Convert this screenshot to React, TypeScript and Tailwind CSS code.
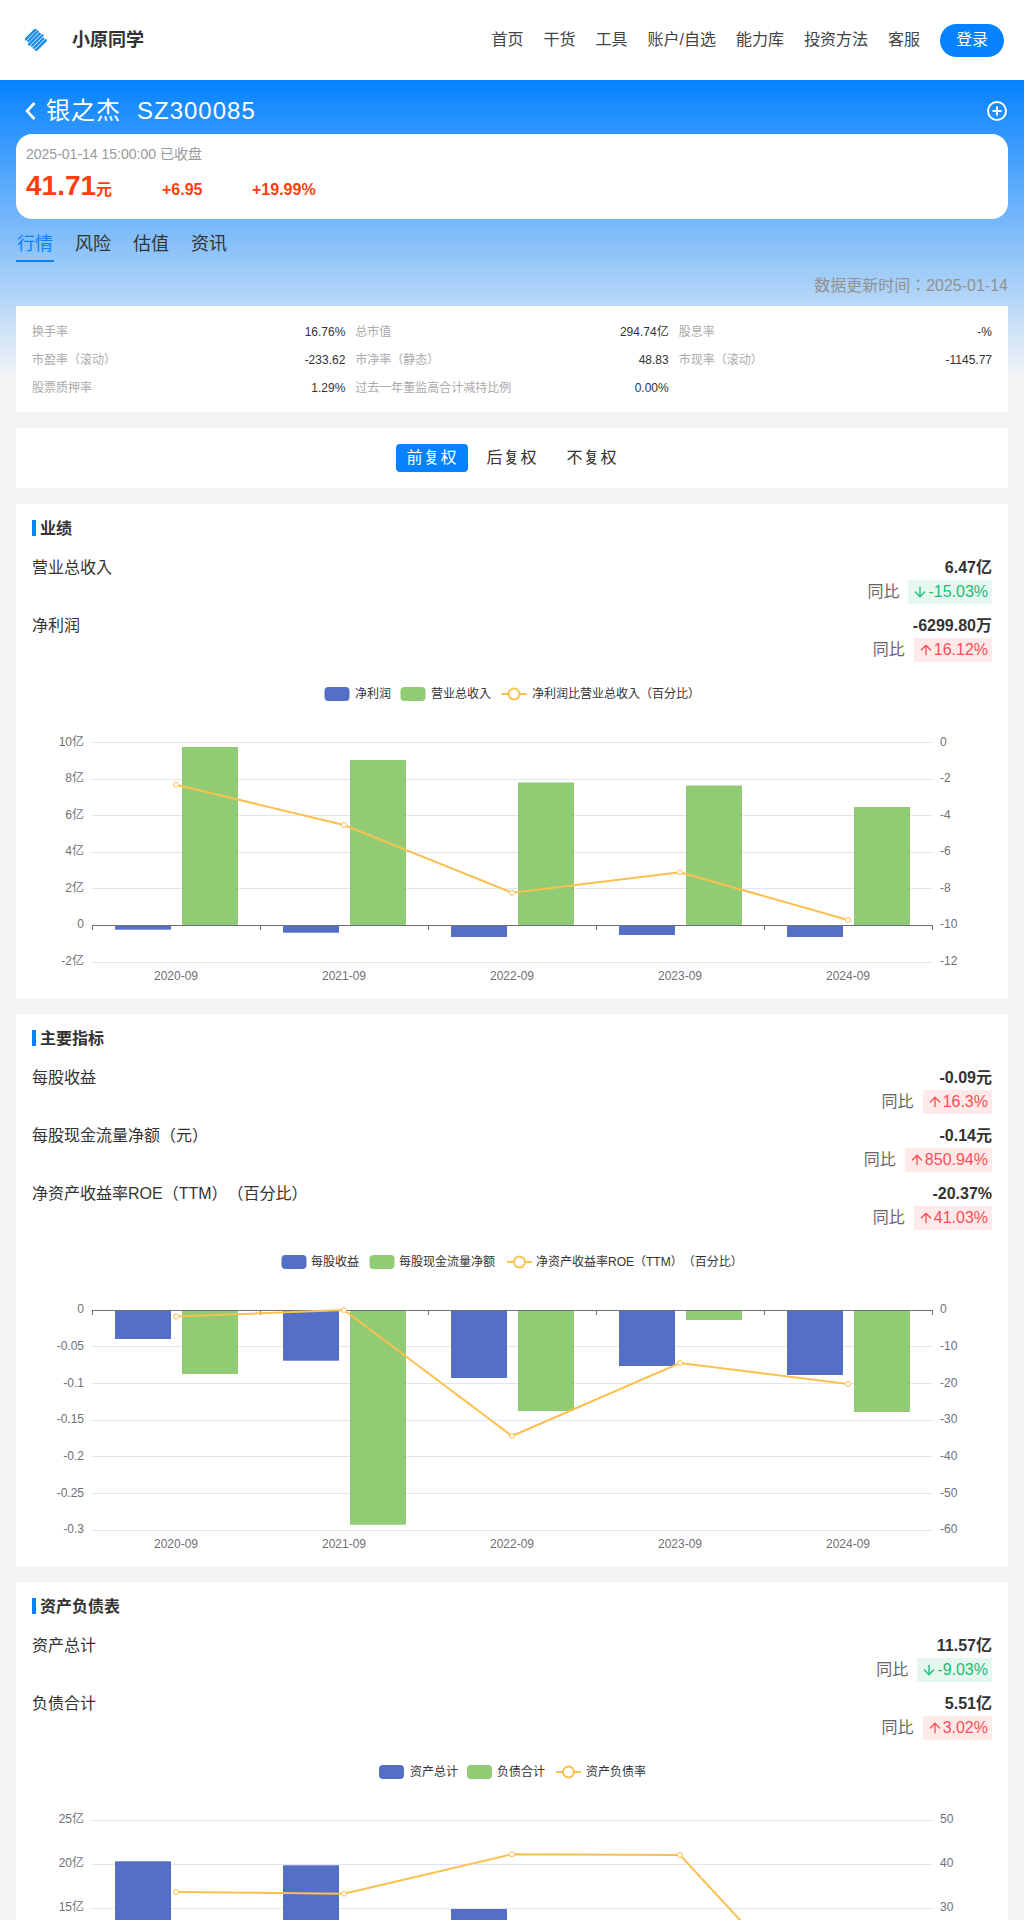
import { ArrowDown, ArrowUp } from "lucide-react";

const nav = ["首页", "干货", "工具", "账户/自选", "能力库", "投资方法", "客服"];
const tabs = ["行情", "风险", "估值", "资讯"];
const years = ["2020-09", "2021-09", "2022-09", "2023-09", "2024-09"];

const stats = [
  ["换手率", "16.76%"],
  ["总市值", "294.74亿"],
  ["股息率", "-%"],
  ["市盈率（滚动）", "-233.62"],
  ["市净率（静态）", "48.83"],
  ["市现率（滚动）", "-1145.77"],
  ["股票质押率", "1.29%"],
  ["过去一年董监高合计减持比例", "0.00%"],
];

const BLUE = "#546fc6";
const GREEN = "#91cc75";
const YELLOW = "#fbc04f";

type ChartProps = {
  top: number;
  zero: number;
  ticks: { y: number; left: string; right: string }[];
  blue: number[];
  green: number[];
  line: number[];
  legend: { x: number; textX: number; label: string; kind: "blue" | "green" | "line" }[];
  labels?: boolean;
};

// crisp 1px rule on the pixel row that holds y
const crisp = (y: number) => Math.floor(y) + 0.5;

const Chart = ({ top, zero, ticks, blue, green, line, legend, labels = true }: ChartProps) => {
  const legendY = top + 24;
  const labelY = ticks[ticks.length - 1].y + 15;
  const cx = (i: number) => 176 + 168 * i;
  const points = line.map((y, i) => `${cx(i)},${y}`).join(" ");

  return (
    <svg viewBox={`16 ${top} 992 328`} className="block w-[992px] h-[328px]">
      {legend.map((item) =>
        item.kind === "line" ? (
          <g key={item.label}>
            <line x1={item.x} x2={item.x + 25} y1={legendY} y2={legendY} stroke={YELLOW} strokeWidth={2} />
            <circle cx={item.x + 12.5} cy={legendY} r={5.5} fill="#fff" stroke={YELLOW} strokeWidth={2} />
            <text x={item.textX} y={legendY + 1} fontSize={12} fill="#333" dominantBaseline="middle">
              {item.label}
            </text>
          </g>
        ) : (
          <g key={item.label}>
            <rect
              x={item.x}
              y={legendY - 7}
              width={25}
              height={14}
              rx={4}
              fill={item.kind === "blue" ? BLUE : GREEN}
            />
            <text x={item.textX} y={legendY + 1} fontSize={12} fill="#333" dominantBaseline="middle">
              {item.label}
            </text>
          </g>
        ),
      )}

      {ticks.map((t) => (
        <g key={t.left}>
          {t.y !== zero && <line x1={92} x2={932} y1={crisp(t.y)} y2={crisp(t.y)} stroke="#e0e6f1" />}
          <text x={84} y={t.y} fontSize={12} fill="#6e7079" textAnchor="end" dominantBaseline="middle">
            {t.left}
          </text>
          <text x={940} y={t.y} fontSize={12} fill="#6e7079" dominantBaseline="middle">
            {t.right}
          </text>
        </g>
      ))}

      {blue.map((y, i) => (
        <rect key={i} x={cx(i) - 61} width={56} y={Math.min(y, zero)} height={Math.abs(y - zero)} fill={BLUE} />
      ))}
      {green.map((y, i) => (
        <rect key={i} x={cx(i) + 6} width={56} y={Math.min(y, zero)} height={Math.abs(y - zero)} fill={GREEN} />
      ))}

      <line x1={92} x2={932} y1={crisp(zero)} y2={crisp(zero)} stroke="#6e7079" />
      {[0, 1, 2, 3, 4, 5].map((i) => (
        <line key={i} x1={92.5 + 168 * i} x2={92.5 + 168 * i} y1={zero} y2={zero + 5} stroke="#6e7079" />
      ))}

      <polyline points={points} fill="none" stroke={YELLOW} strokeWidth={2} />
      {line.map((y, i) => (
        <circle key={i} cx={cx(i)} cy={y} r={2.5} fill="#fff" stroke={YELLOW} />
      ))}

      {labels &&
        years.map((year, i) => (
          <text key={year} x={cx(i)} y={labelY} fontSize={12} fill="#6e7079" textAnchor="middle" dominantBaseline="middle">
            {year}
          </text>
        ))}
    </svg>
  );
};

const Metric = ({ label, value, rate }: { label: string; value: string; rate: string }) => {
  const down = rate.startsWith("-");
  return (
    <div className="flex justify-between text-base text-[#333]">
      <span className="leading-[22px]">{label}</span>
      <div className="flex flex-col items-end">
        <span className="font-bold leading-[22px]">{value}</span>
        <div className="mt-px flex items-center">
          <span className="mr-[9px] text-[#666]">同比</span>
          <span
            className={
              down
                ? "flex h-6 items-center bg-[#e6f7ef] px-1 text-[#18bf74]"
                : "flex h-6 items-center bg-[#ffe9e9] px-1 text-[#ff4d55]"
            }
          >
            {down ? <ArrowDown size={16} /> : <ArrowUp size={16} />}
            {rate}
          </span>
        </div>
      </div>
    </div>
  );
};

const Section = ({
  title,
  metrics,
  children,
}: {
  title: string;
  metrics: { label: string; value: string; rate: string }[];
  children: React.ReactNode;
}) => (
  <section className="bg-white">
    <div className="px-4 pt-4">
      <h2 className="flex h-4 items-center text-base font-bold text-[#333]">
        <span className="mr-1 h-4 w-1 bg-[#0582ff]" />
        <span className="mt-[2px]">{title}</span>
      </h2>
      <div className="mt-[21px] flex flex-col gap-[11px]">
        {metrics.map((m) => (
          <Metric key={m.label} {...m} />
        ))}
      </div>
    </div>
    <div className="mt-2">{children}</div>
  </section>
);

const App = () => {
  return (
    <div className="h-[1920px] overflow-hidden bg-[#f5f5f5] [font-family:'Liberation_Sans','Noto_Sans_CJK_JP',sans-serif] [text-spacing-trim:space-all]">
      <header className="flex h-20 items-center bg-white pl-[25px] pr-5">
        <svg width="22" height="22" viewBox="0 0 22 22" className="shrink-0">
          <g transform="rotate(-45 11 11)" fill="#1b8be8">
            <rect x="3" y="2" width="16" height="2.4" />
            <rect x="4" y="5" width="15" height="2.4" />
            <rect x="2" y="8" width="17" height="2.4" />
            <rect x="3" y="11" width="17" height="2.4" />
            <rect x="3" y="14" width="15" height="2.4" />
            <rect x="3" y="17" width="16" height="2.4" />
          </g>
        </svg>
        <span className="ml-[25px] text-lg font-bold text-[#333]">小原同学</span>
        <nav className="ml-auto flex items-center gap-5 text-base text-[#444]">
          {nav.map((item) => (
            <a key={item}>{item}</a>
          ))}
          <button className="h-[33px] w-16 rounded-full bg-[#0582ff] text-white">登录</button>
        </nav>
      </header>

      <main className="bg-[linear-gradient(180deg,#0582ff_0,#f5f5f5_300px)] bg-no-repeat px-4">
        <div className="flex h-[54px] items-center pt-[7px] text-2xl tracking-[1px] text-white">
          <svg width="11" height="20" viewBox="0 0 11 20" className="ml-[9px] mr-[10px] shrink-0">
            <path d="M9.5 2 2 10l7.5 8" fill="none" stroke="#fff" strokeWidth="2.6" />
          </svg>
          <span>银之杰</span>
          <span className="ml-[16px]">SZ300085</span>
          <svg width="20" height="20" viewBox="0 0 20 20" className="ml-auto mr-px">
            <circle cx="10" cy="10" r="9" fill="none" stroke="#fff" strokeWidth="2" />
            <path d="M10 5.5v9M5.5 10h9" stroke="#fff" strokeWidth="2" />
          </svg>
        </div>

        <div className="h-[85px] rounded-2xl bg-white px-[10px] pt-[10px]">
          <div className="text-sm leading-5 text-[#999]">2025-01-14 15:00:00 已收盘</div>
          <div className="mt-[4px] flex items-baseline font-bold text-[#ff3d0f]">
            <span className="w-[136px]">
              <span className="text-[28px] leading-9">41.71</span>
              <span className="text-base">元</span>
            </span>
            <span className="w-[90px] text-base">+6.95</span>
            <span className="text-base">+19.99%</span>
          </div>
        </div>

        <div className="mt-[13px] flex gap-5">
          {tabs.map((tab, i) => (
            <span
              key={tab}
              className={
                i === 0
                  ? "w-[38px] border-b-2 border-[#0582ff] pb-1 text-center text-lg leading-6 text-[#0582ff]"
                  : "w-[38px] border-b-2 border-transparent pb-1 text-center text-lg leading-6 text-[#333]"
              }
            >
              {tab}
            </span>
          ))}
        </div>

        <div className="mt-[14px] h-5 text-right text-base leading-5 text-[#929292]">数据更新时间：2025-01-14</div>

        <div className="mt-[10px] grid grid-cols-3 gap-x-[10px] gap-y-[10px] bg-white px-4 pb-[15px] pt-[17px] text-xs leading-[18px]">
          {stats.map(([label, value]) => (
            <div key={label} className="flex h-[18px] justify-between">
              <span className="text-[#aaa]">{label}</span>
              <span className="text-[#333]">{value}</span>
            </div>
          ))}
        </div>

        <div className="mt-4 flex justify-center gap-2 bg-white py-4 text-base tracking-[1px]">
          <button className="h-7 w-[72px] rounded bg-[#0582ff] text-white">前复权</button>
          <button className="h-7 w-[72px] text-[#333]">后复权</button>
          <button className="h-7 w-[72px] text-[#333]">不复权</button>
        </div>

        <div className="mt-4 flex flex-col gap-4">
          <Section
            title="业绩"
            metrics={[
              { label: "营业总收入", value: "6.47亿", rate: "-15.03%" },
              { label: "净利润", value: "-6299.80万", rate: "16.12%" },
            ]}
          >
            <Chart
              top={670}
              zero={925}
              ticks={[
                { y: 742.5, left: "10亿", right: "0" },
                { y: 779, left: "8亿", right: "-2" },
                { y: 815.5, left: "6亿", right: "-4" },
                { y: 852, left: "4亿", right: "-6" },
                { y: 888.5, left: "2亿", right: "-8" },
                { y: 925, left: "0", right: "-10" },
                { y: 962, left: "-2亿", right: "-12" },
              ]}
              blue={[929.7, 932.7, 937, 935, 937]}
              green={[747, 760, 782.5, 785.5, 807]}
              line={[784.7, 825, 892.7, 872.3, 920]}
              legend={[
                { x: 324.5, textX: 355, label: "净利润", kind: "blue" },
                { x: 400.5, textX: 431, label: "营业总收入", kind: "green" },
                { x: 501.5, textX: 532, label: "净利润比营业总收入（百分比）", kind: "line" },
              ]}
            />
          </Section>

          <Section
            title="主要指标"
            metrics={[
              { label: "每股收益", value: "-0.09元", rate: "16.3%" },
              { label: "每股现金流量净额（元）", value: "-0.14元", rate: "850.94%" },
              { label: "净资产收益率ROE（TTM）（百分比）", value: "-20.37%", rate: "41.03%" },
            ]}
          >
            <Chart
              top={1238}
              zero={1310}
              ticks={[
                { y: 1310, left: "0", right: "0" },
                { y: 1346.7, left: "-0.05", right: "-10" },
                { y: 1383.4, left: "-0.1", right: "-20" },
                { y: 1420.1, left: "-0.15", right: "-30" },
                { y: 1456.8, left: "-0.2", right: "-40" },
                { y: 1493.5, left: "-0.25", right: "-50" },
                { y: 1530.2, left: "-0.3", right: "-60" },
              ]}
              blue={[1339, 1360.7, 1378, 1366, 1375]}
              green={[1374, 1524.7, 1411, 1320, 1412]}
              line={[1316.5, 1310, 1436, 1363, 1384]}
              legend={[
                { x: 281.5, textX: 311, label: "每股收益", kind: "blue" },
                { x: 369.5, textX: 399, label: "每股现金流量净额", kind: "green" },
                { x: 507, textX: 536, label: "净资产收益率ROE（TTM）（百分比）", kind: "line" },
              ]}
            />
          </Section>

          <Section
            title="资产负债表"
            metrics={[
              { label: "资产总计", value: "11.57亿", rate: "-9.03%" },
              { label: "负债合计", value: "5.51亿", rate: "3.02%" },
            ]}
          >
            <Chart
              top={1748}
              zero={2040}
              ticks={[
                { y: 1820, left: "25亿", right: "50" },
                { y: 1864, left: "20亿", right: "40" },
                { y: 1908, left: "15亿", right: "30" },
              ]}
              blue={[1861.3, 1865.3, 1909, 1930, 1938]}
              green={[]}
              line={[1892, 1893.7, 1854.3, 1855, 2037]}
              legend={[
                { x: 379, textX: 410, label: "资产总计", kind: "blue" },
                { x: 467, textX: 497, label: "负债合计", kind: "green" },
                { x: 556, textX: 586, label: "资产负债率", kind: "line" },
              ]}
              labels={false}
            />
          </Section>
        </div>
      </main>
    </div>
  );
};

export default App;
